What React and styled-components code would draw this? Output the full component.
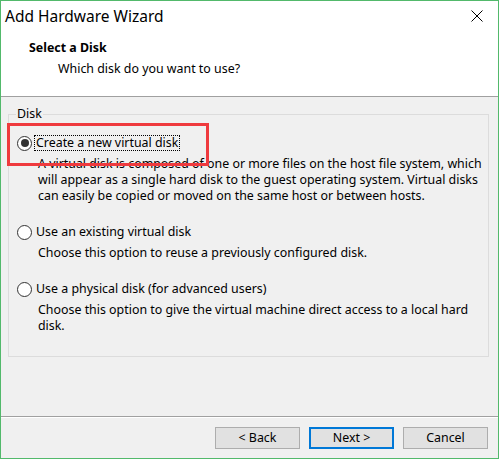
import styled, { createGlobalStyle } from "styled-components";

const GlobalStyle = createGlobalStyle`
  html, body {
    margin: 0;
    padding: 0;
    background: #ffffff;
  }
  body {
    font-family: "Noto Sans", "Liberation Sans", sans-serif;
    font-size: 12.4px;
    color: #000;
  }
`

const Window = styled.div`
    position: relative;
    display: flex;
    flex-direction: column;
    width: 499px;
    height: 459px;
    box-sizing: border-box;
    border: 1px solid #52b96b;
    background: #f0f0f0;
`

const Top = styled.div`
    height: 95px;
    background: #ffffff;
    border-bottom: 1px solid #a0a0a0;
`

const TitleBar = styled.div`
    display: flex;
    justify-content: space-between;
    height: 30px;

    h1 {
        margin: 0;
        padding: 5px 0 0 4px;
        font-size: 15.5px;
        font-weight: normal;
        line-height: 20px;
    }
`

const CloseBox = styled.div`
    display: flex;
    align-items: center;
    justify-content: center;
    width: 42px;
    height: 30px;
`

const HeaderText = styled.div`
    padding: 9px 0 0 28px;

    h2 {
        margin: 0;
        font-size: 12.4px;
        font-weight: bold;
        line-height: 16px;
    }
    p {
        margin: 5px 0 0 29px;
        line-height: 16px;
    }
`

const Main = styled.div`
    flex: 1;
    padding: 9px 9px 0 7px;
`

const GroupBox = styled.fieldset`
    margin: 0;
    min-width: 0;
    padding: 13px 2px 22px 7px;
    border: 1px solid #dcdcdc;

    legend {
        padding: 0 1px;
        line-height: 16px;
    }
`

const Option = styled.div`
    padding-left: 1px;
    & + & { margin-top: 20px; }
`

const Row = styled.div`
    display: flex;
    align-items: center;
    gap: 3px;
    height: 16px;
`

const Radio = styled.span`
    position: relative;
    width: 15px;
    height: 15px;
    box-sizing: border-box;
    border: 1px solid #333333;
    border-radius: 50%;
    background: #ffffff;

    &::after {
        content: "";
        display: ${(p) => (p.$checked ? "block" : "none")};
        position: absolute;
        left: 2.5px;
        top: 2.5px;
        width: 8px;
        height: 8px;
        border-radius: 50%;
        background: #333333;
    }
`

const Label = styled.span`
    display: inline-block;
    padding: 0 1px;
    line-height: 14px;
    outline: ${(p) => (p.$focused ? "1px dotted #000" : "none")};
`

const Desc = styled.p`
    margin: 5px 0 0 21px;
    line-height: 16px;
    white-space: nowrap;
`

const Footer = styled.div`
    display: flex;
    justify-content: flex-end;
    gap: 9px;
    padding: 10px 10px 9px;
    border-top: 1px solid #a0a0a0;
    box-shadow: inset 0 1px 0 #ffffff;
`

const Button = styled.button`
    width: 85px;
    height: 22px;
    box-sizing: border-box;
    padding: 0;
    border: ${(p) => (p.$primary ? "2px solid #0078d7" : "1px solid #adadad")};
    background: #e1e1e1;
    font-family: "Noto Sans", "Liberation Sans", sans-serif;
    font-size: 12.4px;
    line-height: 18px;
    color: #000;
`

const Highlight = styled.div`
    position: absolute;
    left: 6px;
    top: 122px;
    width: 202px;
    height: 43px;
    box-sizing: border-box;
    border: 3px solid #ef3a3e;
    pointer-events: none;
`

const options = [
    {
        label: "Create a new virtual disk",
        checked: true,
        desc: [
            "A virtual disk is composed of one or more files on the host file system, which",
            "will appear as a single hard disk to the guest operating system. Virtual disks",
            "can easily be copied or moved on the same host or between hosts.",
        ],
    },
    {
        label: "Use an existing virtual disk",
        desc: ["Choose this option to reuse a previously configured disk."],
    },
    {
        label: "Use a physical disk (for advanced users)",
        desc: [
            "Choose this option to give the virtual machine direct access to a local hard",
            "disk.",
        ],
    },
]

const App = () => {
    return (
        <>
            <GlobalStyle />
            <Window>
                {/* title + wizard header */}
                <Top>
                    <TitleBar>
                        <h1>Add Hardware Wizard</h1>
                        <CloseBox>
                            <svg width="12" height="12" viewBox="0 0 12 12">
                                <path d="M0.5 0.5 L11.5 11.5 M11.5 0.5 L0.5 11.5" stroke="#000" strokeWidth="1" fill="none" />
                            </svg>
                        </CloseBox>
                    </TitleBar>
                    <HeaderText>
                        <h2>Select a Disk</h2>
                        <p>Which disk do you want to use?</p>
                    </HeaderText>
                </Top>

                {/* disk choices */}
                <Main>
                    <GroupBox>
                        <legend>Disk</legend>
                        {options.map((o, i) => (
                            <Option key={i}>
                                <Row>
                                    <Radio $checked={o.checked} />
                                    <Label $focused={o.checked}>{o.label}</Label>
                                </Row>
                                <Desc>
                                    {o.desc.map((line, j) => (
                                        <span key={j}>{line}{j < o.desc.length - 1 && <br />}</span>
                                    ))}
                                </Desc>
                            </Option>
                        ))}
                    </GroupBox>
                </Main>

                {/* buttons */}
                <Footer>
                    <Button>&lt; Back</Button>
                    <Button $primary>Next &gt;</Button>
                    <Button>Cancel</Button>
                </Footer>

                <Highlight />
            </Window>
        </>
    )
}

export default App;
